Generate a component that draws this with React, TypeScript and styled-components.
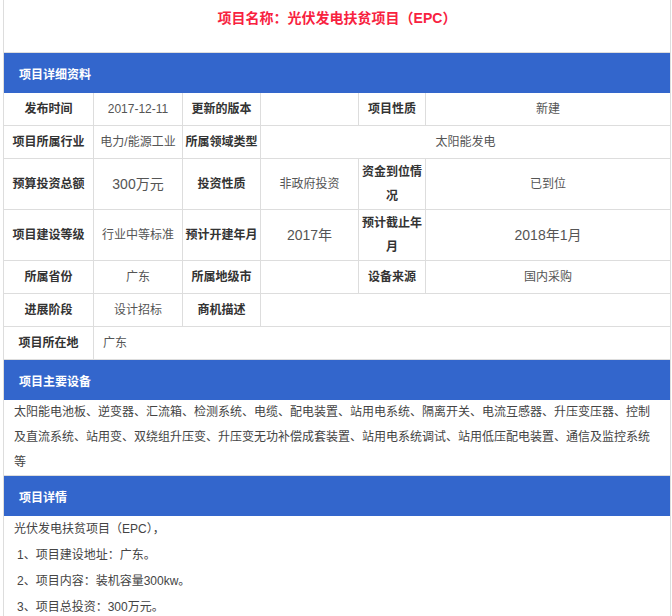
import React from "react";
import styled, { createGlobalStyle } from "styled-components";

const Global = createGlobalStyle`
  html, body { margin: 0; padding: 0; background: #fff; }
  body { font-family: "Liberation Sans", "Noto Sans CJK SC", sans-serif; }
  * { box-sizing: border-box; }
`;

const Page = styled.div`
  margin-left: 3px;
  width: 668px;
  border-left: 1px solid #dddddd;
  border-right: 1px solid #dddddd;
  font-family: "Liberation Sans", "Noto Sans CJK SC", sans-serif;
`;

const TitleBox = styled.div`
  height: 53px;
  border-bottom: 1px solid #dddddd;
  padding-top: 8px;
  text-align: center;
`;

const Title = styled.h1`
  margin: 0;
  font-size: 14px;
  line-height: 20px;
  font-weight: bold;
  color: #f8223f;
`;

const SectionBar = styled.div`
  height: 40px;
  background: #3366cc;
  color: #ffffff;
  font-size: 12px;
  font-weight: bold;
  display: flex;
  align-items: center;
  padding-left: 15px;
`;

const Grid = styled.div`
  display: grid;
  grid-template-columns: 90px 89px 78px 98px 67px 1fr;
  grid-auto-rows: minmax(33px, auto);
`;

const Cell = styled.div<{ $label?: boolean; $span?: number; $big?: boolean; $left?: boolean; $last?: boolean }>`
  grid-column: span ${(p) => p.$span ?? 1};
  border-bottom: 1px solid #dddddd;
  border-right: ${(p) => (p.$last ? "none" : "1px solid #dddddd")};
  display: flex;
  align-items: center;
  justify-content: ${(p) => (p.$left ? "flex-start" : "center")};
  text-align: center;
  padding: 1px ${(p) => (p.$left ? "0 1px 9px" : "2px")};
  padding-left: ${(p) => (p.$left ? "9px" : "2px")};
  font-size: ${(p) => (p.$big ? "14px" : "12px")};
  line-height: 24px;
  font-weight: ${(p) => (p.$label ? "bold" : "normal")};
  color: ${(p) => (p.$label ? "#333333" : "#555555")};
`;

const TextBox = styled.div<{ $lh: number }>`
  padding: 0 10px;
  font-size: 12px;
  line-height: ${(p) => p.$lh}px;
  color: #444444;
`;

const EquipBox = styled(TextBox)`
  border-bottom: 1px solid #dddddd;
`;

const Para = styled.p<{ $indent?: boolean }>`
  margin: 0;
  padding-left: ${(p) => (p.$indent ? "3px" : "0")};
`;

type C = { t: string; label?: boolean; span?: number; big?: boolean; left?: boolean };

const rows: C[][] = [
  [
    { t: "发布时间", label: true },
    { t: "2017-12-11" },
    { t: "更新的版本", label: true },
    { t: "" },
    { t: "项目性质", label: true },
    { t: "新建" },
  ],
  [
    { t: "项目所属行业", label: true },
    { t: "电力/能源工业" },
    { t: "所属领域类型", label: true },
    { t: "太阳能发电", span: 3 },
  ],
  [
    { t: "预算投资总额", label: true },
    { t: "300万元", big: true },
    { t: "投资性质", label: true },
    { t: "非政府投资" },
    { t: "资金到位情况", label: true },
    { t: "已到位" },
  ],
  [
    { t: "项目建设等级", label: true },
    { t: "行业中等标准" },
    { t: "预计开建年月", label: true },
    { t: "2017年", big: true },
    { t: "预计截止年月", label: true },
    { t: "2018年1月", big: true },
  ],
  [
    { t: "所属省份", label: true },
    { t: "广东" },
    { t: "所属地级市", label: true },
    { t: "" },
    { t: "设备来源", label: true },
    { t: "国内采购" },
  ],
  [
    { t: "进展阶段", label: true },
    { t: "设计招标" },
    { t: "商机描述", label: true },
    { t: "", span: 3 },
  ],
  [
    { t: "项目所在地", label: true },
    { t: "广东", span: 5, left: true },
  ],
];

export default function App() {
  return (
    <>
      <Global />
      <Page>
        <TitleBox>
          <Title>项目名称：光伏发电扶贫项目（EPC）</Title>
        </TitleBox>
        <SectionBar>项目详细资料</SectionBar>
        <Grid>
          {rows.map((row, ri) =>
            row.map((c, ci) => (
              <Cell
                key={`${ri}-${ci}`}
                $label={c.label}
                $span={c.span}
                $big={c.big}
                $left={c.left}
                $last={ci === row.length - 1}
              >
                {c.t}
              </Cell>
            ))
          )}
        </Grid>
        <SectionBar>项目主要设备</SectionBar>
        <EquipBox $lh={25}>
          太阳能电池板、逆变器、汇流箱、检测系统、电缆、配电装置、站用电系统、隔离开关、电流互感器、升压变压器、控制及直流系统、站用变、双绕组升压变、升压变无功补偿成套装置、站用电系统调试、站用低压配电装置、通信及监控系统等
        </EquipBox>
        <SectionBar>项目详情</SectionBar>
        <TextBox $lh={26}>
          <Para>光伏发电扶贫项目（EPC），</Para>
          <Para $indent>1、项目建设地址：广东。</Para>
          <Para $indent>2、项目内容：装机容量300kw。</Para>
          <Para $indent>3、项目总投资：300万元。</Para>
        </TextBox>
      </Page>
    </>
  );
}
